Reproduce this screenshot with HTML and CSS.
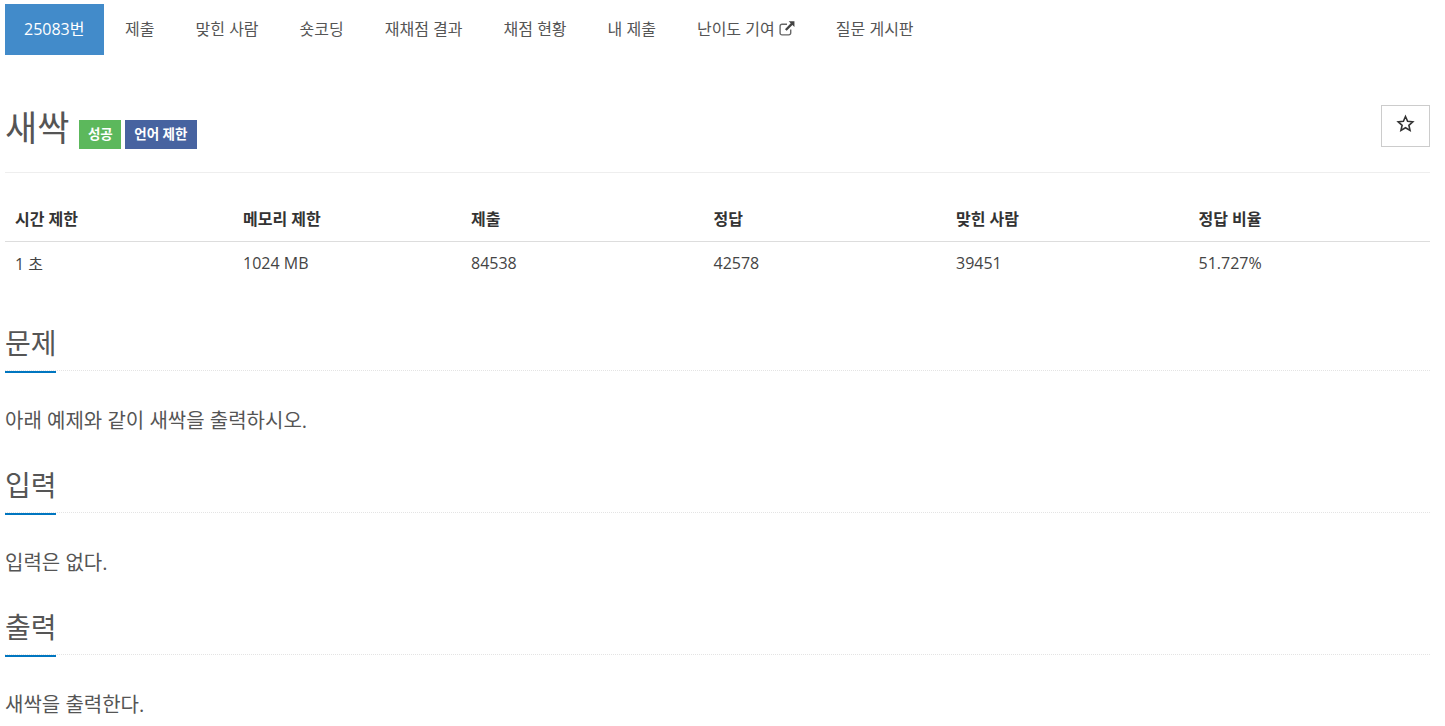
FILE: index.html
```html
<!DOCTYPE html>
<html lang="ko">
  <head>
    <meta charset="UTF-8" />
    <meta name="viewport" content="width=device-width, initial-scale=1">
    <title>25083번: 새싹</title>
    <link rel="stylesheet" href="styles.css">
  </head>
  <body>
    <div class="container">
      <ul class="nav">
        <li class="active"><a href="#">25083번</a></li>
        <li><a href="#">제출</a></li>
        <li><a href="#">맞힌 사람</a></li>
        <li><a href="#">숏코딩</a></li>
        <li><a href="#">재채점 결과</a></li>
        <li><a href="#">채점 현황</a></li>
        <li><a href="#">내 제출</a></li>
        <li>
          <a href="#">난이도 기여
            <svg class="ext-icon" viewBox="0 0 16 16" width="18" height="17" aria-hidden="true">
              <path d="M11.5 9v3.2a1.8 1.8 0 0 1-1.8 1.8H3.3a1.8 1.8 0 0 1-1.8-1.8V5.8A1.8 1.8 0 0 1 3.3 4H8" fill="none" stroke="#666" stroke-width="1.3"/>
              <path d="M9.6 1.2H15v5.4l-1.9-1.9-5.4 5.5-1.6-1.6 5.4-5.5z" fill="#444"/>
            </svg>
          </a>
        </li>
        <li><a href="#">질문 게시판</a></li>
      </ul>

      <div class="page-header">
        <h1>새싹</h1>
        <span class="label label-success">성공</span>
        <span class="label label-lang">언어 제한</span>
        <button type="button" class="star-button">
          <svg viewBox="0 0 18 18" width="19" height="19" aria-hidden="true">
            <path d="M9 2.4l2 4.5 4.9.5-3.7 3.3 1.1 4.8L9 13l-4.3 2.5 1.1-4.8-3.7-3.3 4.9-.5z" fill="none" stroke="#333" stroke-width="1.5" stroke-linejoin="miter"/>
          </svg>
        </button>
      </div>

      <table class="info">
        <thead>
          <tr>
            <th class="col-time">시간 제한</th>
            <th class="col-mem">메모리 제한</th>
            <th class="col-sub">제출</th>
            <th class="col-ans">정답</th>
            <th class="col-who">맞힌 사람</th>
            <th>정답 비율</th>
          </tr>
        </thead>
        <tbody>
          <tr>
            <td>1 초</td>
            <td>1024 MB</td>
            <td>84538</td>
            <td>42578</td>
            <td>39451</td>
            <td>51.727%</td>
          </tr>
        </tbody>
      </table>

      <section class="block">
        <div class="headline"><h2>문제</h2></div>
        <p>아래 예제와 같이 새싹을 출력하시오.</p>
      </section>
      <section class="block">
        <div class="headline"><h2>입력</h2></div>
        <p>입력은 없다.</p>
      </section>
      <section class="block">
        <div class="headline"><h2>출력</h2></div>
        <p>새싹을 출력한다.</p>
      </section>
    </div>
  </body>
</html>
```

FILE: styles.css
```css
* {
  box-sizing: border-box;
}
html, body {
  height: 726px;
  overflow: hidden;
}
body {
  font-family: 'Open Sans', 'Noto Sans CJK KR', sans-serif;
  margin: 0;
  padding: 0;
  background-color: #fff;
  color: #555;
  font-size: 14px;
}
.container {
  padding: 4px 15px 0 5px;
}
a {
  color: inherit;
  text-decoration: none;
}
.nav {
  display: flex;
  list-style: none;
  margin: 0;
  padding: 0;
}
.nav a {
  display: block;
  height: 51px;
  padding: 0 20.5px;
  line-height: 50px;
  font-size: 16px;
  white-space: nowrap;
}
.nav .active {
  margin-right: 0.6px;
}
.nav .active a {
  width: 99px;
  background-color: #428bca;
  color: #fff;
  padding: 0 19px;
}
.ext-icon {
  margin: 0 -1px;
  vertical-align: -2px;
}
.page-header {
  position: relative;
  display: flex;
  align-items: flex-start;
  height: 118px;
  padding-top: 50px;
  border-bottom: 1px solid #eee;
}
h1 {
  margin: 0 10px 0 0;
  font-size: 35px;
  font-weight: 400;
  line-height: 46px;
}
.label {
  height: 29px;
  margin-top: 15px;
  padding: 0 9.5px;
  color: #fff;
  font-size: 13.5px;
  font-weight: 700;
  line-height: 29px;
  white-space: nowrap;
}
.label-success {
  background-color: #5cb85c;
  margin-right: 3.5px;
  padding: 0 8.5px;
}
.label-lang {
  background-color: #4763a0;
}
.star-button {
  position: absolute;
  top: 50px;
  right: 0;
  width: 49px;
  height: 42px;
  padding: 0 0 5px 0;
  background: #fff;
  border: 1px solid #ccc;
  display: flex;
  align-items: center;
  justify-content: center;
}
.info {
  width: 100%;
  margin-top: 23px;
  border-collapse: collapse;
  table-layout: fixed;
  color: #333;
}
.info th, .info td {
  padding: 0 10px;
  text-align: left;
  font-size: 16px;
}
.info th {
  height: 45px;
  color: #333;
  font-weight: 700;
  border-bottom: 1px solid #ddd;
}
.info td {
  height: 44px;
  color: #444;
}
.col-time, .col-mem { width: 228px; }
.col-sub, .col-ans, .col-who { width: 242.5px; }
.block {
  height: 142px;
}
.block:first-of-type {
  margin-top: 40px;
}
.headline {
  height: 46px;
  border-bottom: 1px dotted #e4e4e4;
}
h2 {
  display: inline-block;
  height: 48px;
  margin: 0;
  width: 51px;
  font-size: 28px;
  font-weight: 400;
  line-height: 36px;
  white-space: nowrap;
  border-bottom: 2px solid #0076c0;
}
.block p {
  margin: 0;
  padding-top: 36px;
  font-size: 20px;
  line-height: 27px;
}
```
